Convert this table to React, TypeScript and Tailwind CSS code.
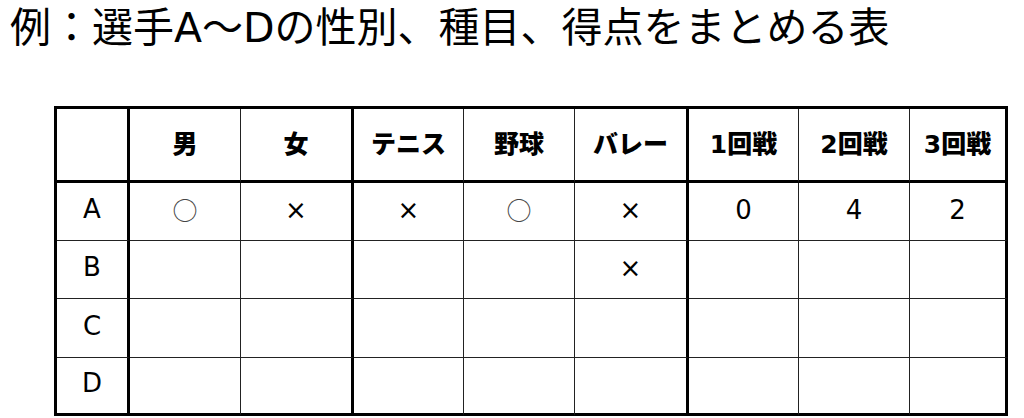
const headers = ["男", "女", "テニス", "野球", "バレー", "1回戦", "2回戦", "3回戦"];

const rows: { name: string; cells: string[] }[] = [
  { name: "A", cells: ["○", "×", "×", "○", "×", "0", "4", "2"] },
  { name: "B", cells: ["", "", "", "", "×", "", "", ""] },
  { name: "C", cells: ["", "", "", "", "", "", "", ""] },
  { name: "D", cells: ["", "", "", "", "", "", "", ""] },
];

// right border per column: thick after name, 女, バレー and the last one
const colBorder = [
  "border-r-[3px] border-r-black",
  "border-r border-r-[#222]",
  "border-r-[3px] border-r-black",
  "border-r border-r-[#222]",
  "border-r border-r-[#222]",
  "border-r-[3px] border-r-black",
  "border-r border-r-[#222]",
  "border-r border-r-[#222]",
  "border-r-[3px] border-r-black",
];

const rowBorder = [
  "h-[74px] border-b-[3px] border-b-black",
  "h-[58px] border-b border-b-[#222]",
  "h-[58px] border-b border-b-[#222]",
  "h-[59px] border-b border-b-[#222]",
  "h-[58px] border-b-[3px] border-b-black",
];

const latin = { fontFamily: '"DejaVu Sans", "Noto Sans CJK JP", sans-serif' };
const cjk = { fontFamily: '"Noto Sans CJK JP", sans-serif' };

export default function App() {
  return (
    <div className="w-[1024px] h-[418px] bg-white text-black overflow-hidden">
      <h1
        className="pl-[10px] pt-[2px] text-[41px] leading-[52px] font-normal whitespace-nowrap"
        style={latin}
      >
        例：選手A～Dの性別、種目、得点をまとめる表
      </h1>

      <div className="ml-[54px] mt-[52px] w-[954px] grid grid-cols-[73px_111px_113px_110px_111px_114px_110px_111px_98px] border-l-[3px] border-t-[3px] border-black">
        <div className={`${colBorder[0]} ${rowBorder[0]}`} />
        {headers.map((h, i) => (
          <div
            key={h}
            className={`${colBorder[i + 1]} ${rowBorder[0]} flex items-center justify-center text-[25px] font-black`}
            style={latin}
          >
            {h}
          </div>
        ))}

        {rows.map((r, ri) => (
          <div key={r.name} className="contents">
            <div
              className={`${colBorder[0]} ${rowBorder[ri + 1]} flex items-center justify-center pb-[4px] text-[26px]`}
              style={latin}
            >
              {r.name}
            </div>
            {r.cells.map((c, ci) => (
              <div
                key={ci}
                className={`${colBorder[ci + 1]} ${rowBorder[ri + 1]} flex items-center justify-center pb-[3px] ${
                  c === "○" ? "text-[25px] text-[#444]" : "text-[26px]"
                }`}
                style={c === "○" ? cjk : latin}
              >
                {c}
              </div>
            ))}
          </div>
        ))}
      </div>
    </div>
  );
}
